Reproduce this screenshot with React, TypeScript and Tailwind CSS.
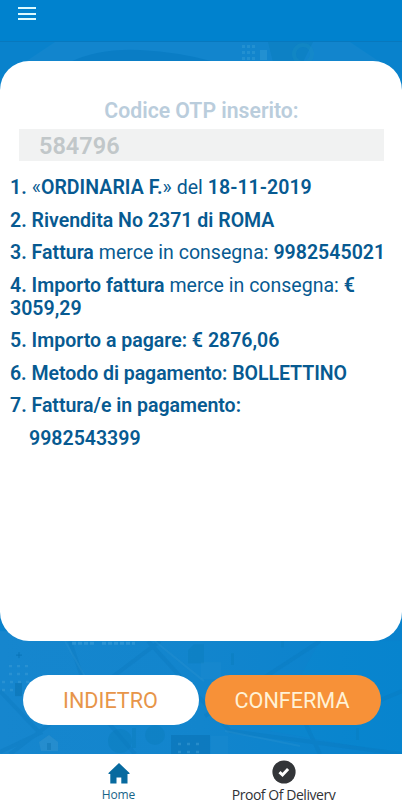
import React from "react";

function CityBackground() {
  return (
    <svg className="absolute inset-0 h-full w-full" viewBox="0 0 402 713" preserveAspectRatio="none" aria-hidden="true">
      <defs>
        <linearGradient id="ground" x1="0" x2="1"><stop offset="0" stopColor="#1686ce" /><stop offset=".5" stopColor="#1285cd" /><stop offset="1" stopColor="#0882cd" /></linearGradient>
      </defs>
      <rect width="402" height="713" fill="#0982cc" />
      <path d="M25 20 55 0H350L380 20Z" fill="#1285cd" />
      <path d="M70 20Q100 6 140 8T215 20Z" fill="#0a7dc5" />
      <g fill="#3b9fd8" opacity=".4">
        <path d="M242 3h3v3h-3zM247 3h3v3h-3zM252 3h3v3h-3zM242 9h3v3h-3zM247 9h3v3h-3zM252 9h3v3h-3zM242 15h3v3h-3zM247 15h3v3h-3zM252 15h3v3h-3zM260 8h7v10h-7z" />
      </g>
      <path d="M268 0h45l-10 20h-30z" fill="#087bb9" opacity=".4" />
      <circle cx="303" cy="12" r="9" fill="none" stroke="#1993c5" strokeWidth="4" opacity=".3" />
      <path d="M0 590H402V713H0Z" fill="url(#ground)" />
      <path d="M320 600H402V713L270 690Z" fill="#088acf" opacity=".3" />
      <path d="M0 650 40 692 0 711M10 713 160 600M70 600 90 660 135 713M148 600 230 690 402 713M205 675 320 600M290 650 320 713M330 680 402 650" fill="none" stroke="#0875b8" strokeWidth="4" opacity=".25" />
      <path d="M65 600 110 680M155 600 204 640M225 690 300 705" fill="none" stroke="#3598d4" strokeWidth="2" opacity=".25" />
      <path d="M72 602h22M102 602h33" stroke="#47a5dd" strokeWidth="3" strokeDasharray="4 2" opacity=".45" />
      <path d="M16 614h6M19 611v6" stroke="#0875b8" strokeWidth="1" />
      <path d="M9 625h21M9 633h21M2 641h28M2 649h12" stroke="#4ca7db" strokeWidth="2.5" strokeDasharray="3 5" opacity=".35" />
      <path d="M15 642h7v13h-7z" fill="#086fad" opacity=".5" />
      <path d="m39 701 10-7 9 7v9H41z" fill="#3694cd" opacity=".5" />
      <path d="M47 702h4v7h-4z" fill="#086fad" opacity=".4" />
      <g fill="#087bb9" opacity=".35">
        <path d="M188 609l6-6h10v19h-16z" />
        <circle cx="120" cy="700" r="12" /><circle cx="155" cy="694" r="10" />
        <path d="M132 687h4v20h-4zM231 612h3v12h-3zM281 600h3v6h-3zM356 687h3v12h-3z" />
      </g>
      <path d="M171 694h39v19h-39z" fill="#0870b2" opacity=".5" />
      <path d="M178 703h24M178 711h24" stroke="#4ca7db" strokeWidth="2.5" strokeDasharray="3 6" opacity=".4" />
      <path d="M201 621h20v17h-20zM211 695h17v18h-17z" fill="#3c9ed6" opacity=".12" />
    </svg>
  );
}

const rows = [
  <span className="tracking-[0.04px]"><b className="font-semibold">1. </b>«<b className="font-semibold">ORDINARIA F.</b>» del <b className="font-semibold">18-11-2019</b></span>,
  <b className="font-semibold">2. Rivendita No 2371 di ROMA</b>,
  <span className="tracking-[0.02px]"><b className="font-semibold">3. Fattura</b> merce in consegna: <b className="font-semibold">9982545021</b></span>,
  <><b className="font-semibold">4. Importo fattura</b> merce in consegna: <b className="font-semibold">€<br />3059,29</b></>,
  <b className="font-semibold">5. Importo a pagare: € 2876,06</b>,
  <b className="font-semibold tracking-[-0.05px]">6. Metodo di pagamento: BOLLETTINO</b>,
  <b className="font-semibold tracking-[-0.02px]">7. Fattura/e in pagamento:</b>,
  <b className="pl-[19px] font-semibold">9982543399</b>,
];

export default function App() {
  return (
    <div className="flex h-[800px] w-[402px] flex-col overflow-hidden bg-white font-['Roboto',sans-serif]">
      <header className="h-[41px] shrink-0 bg-[#0082ce] pl-[18px] pt-[7px]">
        <button aria-label="Menu" className="flex w-[18px] flex-col gap-[3.5px]">
          <span className="h-[2px] w-full bg-[#dcfaff]" />
          <span className="h-[2px] w-full bg-[#dcfaff]" />
          <span className="h-[2px] w-full bg-[#dcfaff]" />
        </button>
      </header>
      <main className="relative flex h-[713px] shrink-0 flex-col border-t border-[#0878bd] pt-[19px]">
        <CityBackground />
        <section className="relative h-[580px] rounded-[29px] bg-white pt-[38px] text-[#075a91]">
          <h1 className="pl-px text-center text-[21.2px] font-semibold leading-[24px] text-[#bacddc]">Codice OTP inserito:</h1>
          <div className="ml-[19px] mt-[6px] h-[32px] w-[365px] bg-[#f1f2f2] pl-[20px] text-[23.5px] font-semibold leading-[35px] text-[#c1c7c9]">584796</div>
          <div className="ml-[10px] mt-[15px] flex flex-col gap-[9.5px] whitespace-nowrap text-[19.55px] leading-[23px]">
            {rows.map((row, i) => <div key={i}>{row}</div>)}
          </div>
        </section>
        <div className="relative ml-[23px] mt-[34px] flex gap-[5.5px] text-[21.6px]">
          <button className="h-[50px] w-[176px] rounded-full bg-white pt-[3px] pr-[1px] text-[#e79549]">INDIETRO</button>
          <button className="h-[50px] w-[176px] rounded-full bg-[#f79138] pt-[3px] pr-[1px] text-[#fff2d6]">CONFERMA</button>
        </div>
      </main>
      <nav className="flex h-[46px] shrink-0 bg-white font-['Open_Sans',sans-serif] leading-[10px]">
        <div className="ml-[36px] flex w-[165px] flex-col items-center pt-[9px] text-[#176488]">
          <svg className="h-[21px] w-[22px] shrink-0" viewBox="0 0 22 21" fill="#076a9f"><path d="M11 0 .5 10v1H2.3v9.6h6.2v-6h4.8v6h6.2V11h2v-1Z" /></svg>
          <div className="mt-[6px] text-[12px] tracking-[-0.1px]">Home</div>
        </div>
        <div className="flex w-[165px] flex-col items-center pt-[6px] text-[#303236]">
          <svg className="h-[24px] w-[24px] shrink-0" viewBox="0 0 24 24"><circle cx="12" cy="12" r="11.6" fill="#333538" /><path d="m7.5 12.2 3 2.8 5.6-6" fill="none" stroke="white" strokeWidth="3" /></svg>
          <div className="mt-[5.5px] whitespace-nowrap text-[14px] tracking-[-0.45px]">Proof Of Delivery</div>
        </div>
      </nav>
    </div>
  );
}
